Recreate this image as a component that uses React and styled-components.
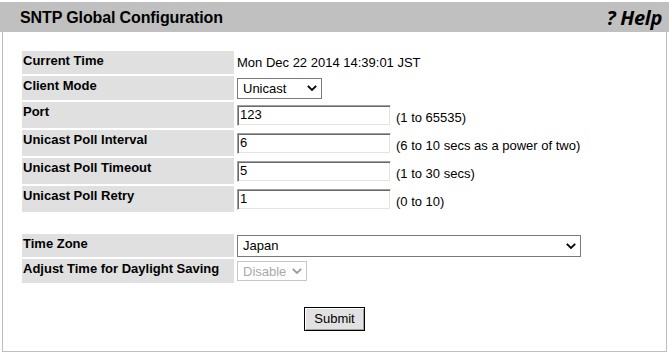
import React from 'react'
import styled, { createGlobalStyle, css } from 'styled-components'

const GlobalStyle = createGlobalStyle`
  html, body {
    margin: 0;
    padding: 0;
    background: #ffffff;
  }
  body {
    font-family: "Liberation Sans", Arial, sans-serif;
    font-size: 13px;
    color: #000000;
  }
`

//
// Page
//
const Page = styled.div`
  padding-top: 2px;
  width: 669px;
`
Page.displayName = 'Page'

//
// Title bar
//
const TitleBar = styled.div`
  height: 30px;
  background: #c0c0c0;
  display: flex;
  align-items: center;
  justify-content: space-between;
  padding: 0 7px 0 20px;
`
TitleBar.displayName = 'TitleBar'

const Title = styled.h1`
  margin: 0;
  padding-top: 2px;
  font-family: "Liberation Sans", Arial, sans-serif;
  font-size: 16px;
  letter-spacing: -0.12px;
  font-weight: bold;
`
Title.displayName = 'Title'

const HelpLink = styled.a`
  font-family: "Open Sans", "Noto Sans", sans-serif;
  font-size: 20px;
  font-weight: 700;
  font-style: italic;
  color: #000000;
  text-decoration: none;
  letter-spacing: -0.3px;
`
HelpLink.displayName = 'HelpLink'

//
// Panel
//
const Panel = styled.div`
  margin: 0 2px;
  border: 1px solid #bdbdbd;
  border-top: none;
  padding: 19px 19px 20px;
`
Panel.displayName = 'Panel'

const Rows = styled.div`
  display: flex;
  flex-direction: column;
  gap: 2px;
`
Rows.displayName = 'Rows'

const Row = styled.div`
  display: grid;
  grid-template-columns: 212px 1fr;
  column-gap: 2px;
  height: ${props => props.h}px;
`
Row.displayName = 'Row'

const Label = styled.div`
  background: #e0e0e0;
  font-weight: bold;
  padding: 2px 1px 0;
  line-height: 15px;
  white-space: nowrap;
`
Label.displayName = 'Label'

const Value = styled.div`
  display: flex;
  align-items: center;
  padding-left: 1px;
  white-space: nowrap;
`
Value.displayName = 'Value'

const Spacer = styled.div`
  height: 18px;
`
Spacer.displayName = 'Spacer'

//
// Controls
//
const TextInput = styled.input`
  box-sizing: border-box;
  width: 154px;
  height: 21px;
  margin: 0;
  padding: 0 2px 1px;
  border: 1px solid;
  border-color: #a0a0a0 #ffffff #ffffff #a0a0a0;
  box-shadow: inset 1px 1px 0 #696969, inset -1px -1px 0 #e3e3e3;
  font-family: "Liberation Sans", Arial, sans-serif;
  font-size: 13px;
  color: #000000;
  background: #ffffff;
  outline: none;
`
TextInput.displayName = 'TextInput'

const Hint = styled.span`
  margin-left: 5px;
  padding-top: 4px;
  line-height: 15px;
`
Hint.displayName = 'Hint'

const SelectBox = styled.div`
  box-sizing: border-box;
  width: ${props => props.w}px;
  height: ${props => props.h}px;
  display: flex;
  align-items: center;
  justify-content: space-between;
  padding: 0 4px 0 5px;
  border: 1px solid #7a7a7a;
  background: #ffffff;
  line-height: 15px;

  ${props => props.disabled && css`
    border-color: #c6c6c6;
    color: #a9a9a9;
  `}
`
SelectBox.displayName = 'SelectBox'

const Chevron = ({ color = '#000000' }) => (
  <svg width="10" height="6" viewBox="0 0 10 6">
    <polyline
      points="0.8,0.8 5,5 9.2,0.8"
      fill="none"
      stroke={color}
      strokeWidth="1.8"
    />
  </svg>
)

const Select = ({ w, h, value, disabled }) => (
  <SelectBox w={w} h={h} disabled={disabled}>
    <span>{value}</span>
    <Chevron color={disabled ? '#9a9a9a' : '#000000'} />
  </SelectBox>
)

const Footer = styled.div`
  display: flex;
  justify-content: center;
  padding-top: 24px;
`
Footer.displayName = 'Footer'

const Button = styled.button`
  box-sizing: border-box;
  width: 61px;
  height: 24px;
  margin: 0;
  padding: 0 0 1px;
  border: 1px solid #000000;
  background: #e1e1e1;
  box-shadow: inset 1px 1px 0 #ffffff, inset -1px -1px 0 #a0a0a0;
  font-family: "Liberation Sans", Arial, sans-serif;
  font-size: 13px;
  color: #000000;
`
Button.displayName = 'Button'

const pollRows = [
  { label: 'Port', value: '123', hint: '(1 to 65535)' },
  { label: 'Unicast Poll Interval', value: '6', hint: '(6 to 10 secs as a power of two)' },
  { label: 'Unicast Poll Timeout', value: '5', hint: '(1 to 30 secs)' },
  { label: 'Unicast Poll Retry', value: '1', hint: '(0 to 10)' },
]

export default function App() {
  return (
    <Page>
      <GlobalStyle />
      <TitleBar>
        <Title>SNTP Global Configuration</Title>
        <HelpLink href="#">? Help</HelpLink>
      </TitleBar>
      <Panel>
        <Rows>
          <Row h={23}>
            <Label>Current Time</Label>
            <Value>Mon Dec 22 2014 14:39:01 JST</Value>
          </Row>
          <Row h={24}>
            <Label>Client Mode</Label>
            <Value><Select w={85} h={21} value="Unicast" /></Value>
          </Row>
          {pollRows.map(row => (
            <Row h={26} key={row.label}>
              <Label>{row.label}</Label>
              <Value>
                <TextInput defaultValue={row.value} />
                <Hint>{row.hint}</Hint>
              </Value>
            </Row>
          ))}
          <Spacer />
          <Row h={23}>
            <Label>Time Zone</Label>
            <Value><Select w={344} h={22} value="Japan" /></Value>
          </Row>
          <Row h={24}>
            <Label>Adjust Time for Daylight Saving</Label>
            <Value><Select w={70} h={20} value="Disable" disabled /></Value>
          </Row>
        </Rows>
        <Footer>
          <Button type="button">Submit</Button>
        </Footer>
      </Panel>
    </Page>
  )
}
